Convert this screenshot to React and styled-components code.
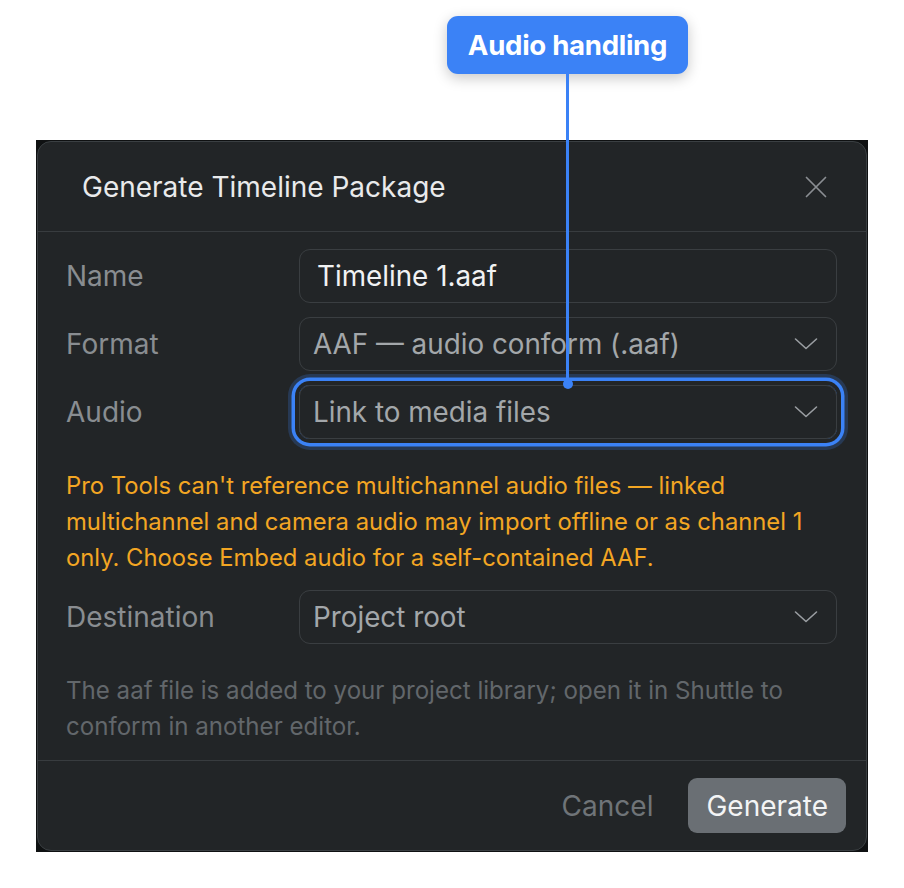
import React from 'react'
import styled, { createGlobalStyle } from 'styled-components'

const GlobalStyle = createGlobalStyle`
  html, body { margin: 0; padding: 0; background: #ffffff; }
  body { font-family: Inter, "Noto Sans", sans-serif; -webkit-font-smoothing: antialiased; }
  * { box-sizing: border-box; }
`

const Page = styled.div`
  position: relative;
  width: 904px;
  height: 888px;
  padding: 140px 0 0 36px;
`

const Callout = styled.div`
  position: absolute;
  left: 447px;
  top: 16px;
  width: 241px;
  height: 58px;
  display: flex;
  align-items: center;
  justify-content: center;
  background: #3b82f6;
  color: #ffffff;
  font-size: 27.6px;
  font-weight: 700;
  letter-spacing: -0.3px;
  border-radius: 11px;
  box-shadow: 0 4px 14px rgba(0, 0, 0, 0.22);
  z-index: 3;
`

const Connector = styled.div`
  position: absolute;
  left: 566px;
  top: 74px;
  width: 3px;
  height: 310px;
  background: #3b82f6;
  z-index: 3;

  &::after {
    content: '';
    position: absolute;
    left: -3.5px;
    bottom: -5px;
    width: 10px;
    height: 10px;
    border-radius: 50%;
    background: #3b82f6;
  }
`

const Backdrop = styled.div`
  width: 832px;
  height: 712px;
  background: #0f1112;
  padding: 1px;
`

const Dialog = styled.div`
  height: 100%;
  display: flex;
  flex-direction: column;
  background: #222527;
  border: 1.5px solid #3a3f42;
  border-radius: 14px;
  overflow: hidden;
`

const Header = styled.header`
  height: 90px;
  flex: none;
  display: flex;
  align-items: center;
  justify-content: space-between;
  padding: 0 39px 0 44px;
  border-bottom: 1.5px solid #383c3f;
`

const Title = styled.h2`
  margin: 0;
  font-size: 28px;
  font-weight: 400;
  color: #e9eaeb;
`

const CloseButton = styled.button`
  width: 22px;
  height: 22px;
  padding: 0;
  border: none;
  background: none;
  display: flex;
  align-items: center;
  justify-content: center;
`

const Body = styled.div`
  flex: 1;
  padding: 17px 29px 0 28px;
  display: flex;
  flex-direction: column;
`

const Row = styled.div`
  display: grid;
  grid-template-columns: 233px 1fr;
  align-items: center;
  margin-bottom: ${p => p.$gap ?? 14}px;
`

const Label = styled.label`
  font-size: 28px;
  color: #898d91;
`

const Field = styled.div`
  height: 54px;
  display: flex;
  align-items: center;
  justify-content: space-between;
  padding: 0 ${p => (p.$select ? 18 : 16)}px 0 ${p => (p.$select ? 13 : 17)}px;
  border: 1.5px solid #3a3e41;
  border-radius: 11px;
  font-size: 27.8px;
  color: ${p => (p.$select ? '#a3a7aa' : '#f1f2f3')};
  box-shadow: ${p =>
    p.$focused
      ? '0 0 0 4px #222527, 0 0 0 7.5px #3b82f6, 0 0 0 11px rgba(59,130,246,0.22)'
      : 'none'};
`

const Warning = styled.p`
  margin: 29px 0 14px;
  font-size: 23.8px;
  line-height: 36px;
  color: #f3a623;
`

const Help = styled.p`
  margin: 29px 0 0;
  font-size: 24.1px;
  line-height: 36px;
  color: #62676b;
`

const Footer = styled.footer`
  height: 90px;
  flex: none;
  display: flex;
  align-items: center;
  justify-content: flex-end;
  gap: 17px;
  padding: 0 20px;
  border-top: 1.5px solid #383c3f;
`

const Button = styled.button`
  height: 55px;
  padding: 0 18px;
  border: none;
  border-radius: 9px;
  font-family: inherit;
  font-size: 28px;
  background: ${p => (p.$primary ? '#6a6f74' : 'transparent')};
  color: ${p => (p.$primary ? '#f3f4f5' : '#6f7478')};
`

const Chevron = () => (
  <svg width="24" height="14" viewBox="0 0 24 14" fill="none" stroke="#9a9ea2" strokeWidth="1.6" strokeLinecap="round" strokeLinejoin="round">
    <path d="M1.5 2 L12 11.5 L22.5 2" />
  </svg>
)

const App = () => {
  return (
    <Page>
      <GlobalStyle />
      <Callout>Audio handling</Callout>
      <Connector />
      <Backdrop>
        <Dialog>
          <Header>
            <Title>Generate Timeline Package</Title>
            <CloseButton aria-label="Close">
              <svg width="22" height="22" viewBox="0 0 22 22" fill="none" stroke="#8a8e92" strokeWidth="1.7" strokeLinecap="round">
                <path d="M1.5 1.5 L20.5 20.5 M20.5 1.5 L1.5 20.5" />
              </svg>
            </CloseButton>
          </Header>
          <Body>
            <Row>
              <Label>Name</Label>
              <Field>Timeline 1.aaf</Field>
            </Row>
            <Row>
              <Label>Format</Label>
              <Field $select>AAF — audio conform (.aaf)<Chevron /></Field>
            </Row>
            <Row $gap={0}>
              <Label>Audio</Label>
              <Field $select $focused>Link to media files<Chevron /></Field>
            </Row>
            <Warning>
              Pro Tools can't reference multichannel audio files — linked multichannel and camera audio may import offline or as channel 1 only. Choose Embed audio for a self-contained AAF.
            </Warning>
            <Row $gap={0}>
              <Label>Destination</Label>
              <Field $select>Project root<Chevron /></Field>
            </Row>
            <Help>
              The aaf file is added to your project library; open it in Shuttle to conform in another editor.
            </Help>
          </Body>
          <Footer>
            <Button>Cancel</Button>
            <Button $primary>Generate</Button>
          </Footer>
        </Dialog>
      </Backdrop>
    </Page>
  )
}

export default App
